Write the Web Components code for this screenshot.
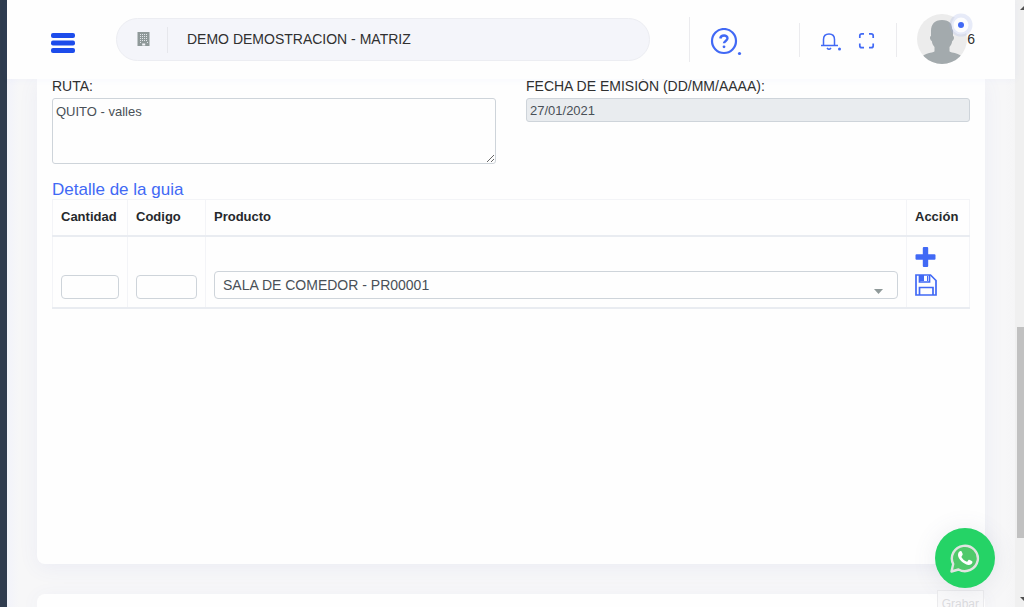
<!DOCTYPE html>
<html lang="es">
<head>
<meta charset="utf-8">
<meta name="viewport" content="width=device-width, initial-scale=1">
<title>Guia de remision</title>
<style>
    body {
        margin: 0;
        font-family: "Liberation Sans", Arial, sans-serif;
        font-size: 14px;
        color: #303030;
        background: #f7f7f8;
        --primary: #4169f5;
        --border: #ced4da;
        --line: #e9ecf1;
    }
</style>
</head>
<body>
<app-shell>
    <top-bar slot="header" company="DEMO DEMOSTRACION - MATRIZ" count="6"></top-bar>
    <panel-card class="detail">
        <div style="display: grid; grid-template-columns: 1fr 1fr; gap: 30px; align-items: start;">
            <form-field label="RUTA:" value="QUITO - valles" type="textarea"></form-field>
            <form-field label="FECHA DE EMISIÓN (DD/MM/AAAA):" value="27/01/2021" type="readonly"></form-field>
        </div>
        <guide-table heading="Detalle de la guia"></guide-table>
    </panel-card>
    <panel-card class="next">
        <save-button>Grabar</save-button>
    </panel-card>
    <whatsapp-link slot="float"></whatsapp-link>
</app-shell>

<script>
class AppShell extends HTMLElement {
    constructor() {
        super();
        this.attachShadow({ mode: 'open' }).innerHTML = `
            <style>
                :host {
                    display: grid;
                    grid-template-columns: 7px 1fr 9px;
                    height: 100vh;
                    overflow: hidden;
                }
                .side { background: #2f3c4e; }
                .page { display: flex; flex-direction: column; min-width: 0; }
                main {
                    flex: 1;
                    display: flex;
                    flex-direction: column;
                    gap: 30px;
                    padding: 0 30px;
                    min-height: 0;
                    background: linear-gradient(90deg, #f2f3fa, #f7f7f8 12px, #f7f7f8 calc(100% - 10px), #f5f5f6);
                }
                /* the last card runs on below the fold */
                ::slotted(.detail) { flex: 1; border-radius: 0 0 8px 8px; }
                ::slotted(.next) { flex: 0 0 13px; border-radius: 8px 8px 0 0; }
                .bar {
                    display: flex;
                    flex-direction: column;
                    justify-content: space-between;
                    background: #f0f0f0;
                }
                .bar svg { width: 9px; height: 14px; }
                .track { flex: 1; display: flex; flex-direction: column; padding-left: 2px; }
                .before { flex: 313; }
                .thumb { flex: 211; background: #c1c1c1; }
                .after { flex: 55; }
            </style>
            <div class="side"></div>
            <div class="page">
                <slot name="header"></slot>
                <main><slot></slot></main>
            </div>
            <div class="bar" aria-hidden="true">
                <svg viewBox="0 0 9 14"><path d="M5 10l4-4v4z" fill="#505050"/></svg>
                <div class="track"><div class="before"></div><div class="thumb"></div><div class="after"></div></div>
                <svg viewBox="0 0 9 14"><path d="M5 4l4 4V4z" fill="#505050"/></svg>
            </div>
            <slot name="float"></slot>
        `;
    }
}

class TopBar extends HTMLElement {
    constructor() {
        super();
        this.attachShadow({ mode: 'open' }).innerHTML = `
            <style>
                :host {
                    display: flex;
                    align-items: center;
                    height: 79px;
                    padding: 0 40px 0 43px;
                    box-sizing: border-box;
                    background: #fefefe;
                    box-shadow: 0 0 8px rgba(65, 105, 245, 0.05);
                    z-index: 2;
                }
                button {
                    border: 0;
                    padding: 0;
                    background: none;
                    color: var(--primary);
                    display: block;
                    cursor: pointer;
                }
                svg { display: block; }
                .menu { margin: 7px 40px 0 0; }
                .company {
                    flex: 0 1 534px;
                    height: 43px;
                    box-sizing: border-box;
                    display: flex;
                    align-items: center;
                    border: 1px solid #ecedf2;
                    border-radius: 22px;
                    background: #f4f5fa;
                    padding-left: 20px;
                }
                .company span {
                    border-left: 1px solid #e6e7ec;
                    line-height: 24px;
                    padding-bottom: 2px;
                    margin-left: 17px;
                    padding-left: 19px;
                }
                .tools { flex: 1; display: flex; align-items: center; justify-content: flex-end; }
                .tools > i { width: 1px; height: 34px; background: #ebebee; }
                .tools > i.tall { height: 45px; }
                .help { margin: 4px 57px 0 20px; }
                .bell { margin: 3px 16px 0 20px; }
                .full { margin: 3px 20px 0 0; }
                .user { display: flex; align-items: center; margin: 0 0 2px 20px; color: #303030; font: inherit; }
            </style>
            <button class="menu" aria-label="Menu">
                <svg width="26" height="20" viewBox="0 0 26 20" fill="#1d4ceb"><rect x="1" width="24" height="5" rx="2"/><rect x="1" y="7.5" width="24" height="5" rx="2"/><rect x="1" y="15" width="24" height="5" rx="2"/></svg>
            </button>
            <div class="company">
                <svg width="13" height="16" viewBox="0 0 13 16"><path d="M.5 0h12v14h-12z" fill="#8f9999"/><path d="M3 2.500h8M3 4.500h8M3 6.500h8M3 8.500h8M3 10.500h1M10 10.500h1" stroke="#e2e5ea" stroke-dasharray="1 1"/><path d="M5.200 11.500h3V13.500h-3z" fill="#f4f5fa"/></svg>
                <span></span>
            </div>
            <div class="tools">
                <i class="tall"></i>
                <button class="help" aria-label="Ayuda">
                    <svg width="32" height="28" viewBox="0 0 32 28" fill="none" stroke="currentColor" stroke-width="2.200"><circle cx="14" cy="13" r="12"/><path d="M10.300 10.500C10.800 6.500 17.500 6.500 17.500 10.300c0 2.500-3.500 2.700-3.500 5" stroke-width="2.400"/><circle cx="14" cy="18.800" r="1.400" fill="currentColor" stroke="none"/><circle cx="29.500" cy="25.500" r="1.600" fill="currentColor" stroke="none"/></svg>
                </button>
                <i></i>
                <button class="bell" aria-label="Notificaciones">
                    <svg width="22" height="20" viewBox="0 0 22 20" fill="none" stroke="currentColor" stroke-width="1.500"><path d="M1 14.500h17M3.500 14.500V8.500C3.500 5 5.800 3 9 3s5.500 2 5.500 5.500v6"/><path d="M7 17q2 2.500 4 0"/><circle cx="19.500" cy="18" r="1.500" fill="currentColor" stroke="none"/></svg>
                </button>
                <button class="full" aria-label="Pantalla completa">
                    <svg width="18" height="18" viewBox="0 0 18 18" fill="none" stroke="currentColor" stroke-width="1.700"><path d="M1.800 6V3.800q0-2 2-2H6M11 1.800h2.200q2 0 2 2V6M15.200 11.500v2.200q0 2-2 2H11M6 15.700H3.800q-2 0-2-2v-2.200"/></svg>
                </button>
                <i></i>
                <button class="user" aria-label="Usuario">
                    <svg width="50" height="50" viewBox="0 0 50 50" overflow="visible"><defs><clipPath id="c"><circle cx="25" cy="25" r="25"/></clipPath></defs><circle cx="25" cy="25" r="25" fill="#ececec"/><path clip-path="url(#c)" fill="#a3aaad" d="M25 6c7.500 0 11 4.500 11 11v5c1.500.3 1.300 4-.8 5-.4 3-1.300 4.500-2.700 6v4c0 2 7 1 12.500 5.500V51H5v-8.500c5.500-4.500 12.500-3.500 12.500-5.500v-4c-1.400-1.500-2.300-3-2.700-6-2.100-1-2.300-4.700-.8-5v-5c0-6.500 3.500-11 11-11z"/><circle cx="44" cy="11" r="9.500" fill="#fdfdfe" stroke="#a3b2e8" stroke-opacity=".25" stroke-width="4"/><circle cx="44" cy="11" r="3" fill="#4169f5"/></svg>
                    <span class="count"></span>
                </button>
            </div>
        `;
    }

    connectedCallback() {
        this.shadowRoot.querySelector('.company span').textContent = this.getAttribute('company');
        this.shadowRoot.querySelector('.count').textContent = this.getAttribute('count');
    }
}

class PanelCard extends HTMLElement {
    constructor() {
        super();
        this.attachShadow({ mode: 'open' }).innerHTML = `
            <style>
                :host {
                    display: block;
                    position: relative;
                    box-sizing: border-box;
                    min-height: 0;
                    padding: 0 15px;
                    background: #fefefe;
                    box-shadow: 0 4px 20px rgba(80, 100, 200, 0.07);
                }
            </style>
            <slot></slot>
        `;
    }
}

class FormField extends HTMLElement {
    constructor() {
        super();
        this.attachShadow({ mode: 'open' });
    }

    connectedCallback() {
        const control = this.getAttribute('type') === 'textarea'
            ? '<textarea id="control"></textarea>'
            : '<input id="control" type="text" readonly>';

        this.shadowRoot.innerHTML = `
            <style>
                :host { display: block; }
                label { display: block; line-height: 14px; padding-bottom: 5px; }
                input, textarea {
                    display: block;
                    width: 100%;
                    height: 24px;
                    box-sizing: border-box;
                    margin: 0;
                    padding: 0 3px;
                    border: 1px solid var(--border);
                    border-radius: 3px;
                    background: #fefefe;
                    color: #495057;
                    font: 13px "Liberation Sans", Arial, sans-serif;
                }
                textarea { height: 66px; padding: 5px 3px; }
                input[readonly] { background: #e9ecef; }
            </style>
            <label for="control">${this.getAttribute('label')}</label>
            ${control}
        `;
        this.shadowRoot.querySelector('#control').value = this.getAttribute('value');
    }
}

class GuideTable extends HTMLElement {
    constructor() {
        super();
        this.attachShadow({ mode: 'open' }).innerHTML = `
            <style>
                :host { display: block; margin-top: 16px; }
                h2 {
                    margin: 0;
                    font-size: 17px;
                    font-weight: normal;
                    line-height: 19px;
                    color: var(--primary);
                }
                table { width: 100%; border-collapse: collapse; table-layout: fixed; }
                th, td { border: 1px solid #f3f4f7; padding: 8px; }
                th {
                    height: 19px;
                    border-bottom: 2px solid var(--line);
                    text-align: left;
                    vertical-align: top;
                    font-size: 13px;
                    line-height: 18px;
                    color: #26292c;
                }
                td { height: 54px; border-bottom: 2px solid var(--line); vertical-align: bottom; }
                td.action { vertical-align: middle; }
                input, select {
                    display: block;
                    width: 100%;
                    box-sizing: border-box;
                    margin: 0;
                    border: 1px solid var(--border);
                    border-radius: 4px;
                    background: #fefefe;
                    color: #495057;
                    font: 14px "Liberation Sans", Arial, sans-serif;
                }
                input { height: 24px; }
                .pick { position: relative; }
                select { appearance: none; height: 28px; padding: 0 24px 0 8px; }
                .pick svg { position: absolute; right: 15px; bottom: 5px; }
                .actions { display: flex; flex-direction: column; gap: 6px; }
                button { border: 0; padding: 0; background: none; color: var(--primary); align-self: flex-start; }
                svg { display: block; }
            </style>
            <h2></h2>
            <table>
                <colgroup>
                    <col style="width: 75px"><col style="width: 78px"><col><col style="width: 63px">
                </colgroup>
                <thead>
                    <tr><th>Cantidad</th><th>Codigo</th><th>Producto</th><th>Acción</th></tr>
                </thead>
                <tbody>
                    <tr>
                        <td><input type="text" aria-label="Cantidad"></td>
                        <td><input type="text" aria-label="Codigo"></td>
                        <td>
                            <div class="pick">
                                <select aria-label="Producto"><option>SALA DE COMEDOR - PR00001</option></select>
                                <svg width="9" height="5" viewBox="0 0 9 5"><path d="M0 0h9L4.500 5z" fill="#8f9999"/></svg>
                            </div>
                        </td>
                        <td class="action">
                            <div class="actions">
                                <button aria-label="Agregar"><svg width="22" height="20" viewBox="0 0 22 20"><path d="M8.800 0h3.400q1 0 1 1v6.200h6.300q1 0 1 1v3.600q0 1-1 1h-6.300V19q0 1-1 1H8.800q-1 0-1-1v-6.200H1.500q-1 0-1-1V8.200q0-1 1-1h6.300V1q0-1 1-1z" fill="currentColor"/></svg></button>
                                <button aria-label="Guardar"><svg width="22" height="24" viewBox="0 0 22 24" fill="none" stroke="currentColor" stroke-width="1.700"><path d="M1 2h14.500L21 7.500V22H1z"/><path d="M4.500 2v7h10V2M4.500 22v-7.500h13.500V22"/><path d="M5 2h4v6H5zM12 3h1v5h-1z" fill="currentColor" stroke="none"/></svg></button>
                            </div>
                        </td>
                    </tr>
                </tbody>
            </table>
        `;
    }

    connectedCallback() {
        this.shadowRoot.querySelector('h2').textContent = this.getAttribute('heading');
    }
}

class SaveButton extends HTMLElement {
    constructor() {
        super();
        this.attachShadow({ mode: 'open' }).innerHTML = `
            <style>
                :host { position: absolute; right: 1px; top: -4px; }
                button {
                    display: block;
                    padding: 4px;
                    border: 1px solid #ebebed;
                    background: #f9f9fa;
                    color: #dcdcdf;
                    font: 12px/18px "Liberation Sans", Arial, sans-serif;
                }
            </style>
            <button><slot></slot></button>
        `;
    }
}

class WhatsappLink extends HTMLElement {
    constructor() {
        super();
        this.attachShadow({ mode: 'open' }).innerHTML = `
            <style>
                :host { position: fixed; right: 29px; bottom: 19px; z-index: 3; }
                a {
                    display: flex;
                    align-items: center;
                    justify-content: center;
                    width: 60px;
                    height: 60px;
                    border-radius: 50%;
                    background: #25d366;
                    box-shadow: 0 2px 24px rgba(90, 100, 130, 0.12);
                }
            </style>
            <a href="#whatsapp" aria-label="WhatsApp">
                <svg width="30" height="30" viewBox="0 0 30 30"><path d="M1.500 28.500l1.700-7.500A13 12.700 0 1 1 8.500 26.500z" fill="#50c96b" stroke="#e0e4e1" stroke-width="2.400" stroke-linejoin="round"/><path d="M10 8.200c1.200-.4 1.700.2 2.200 1.600.7 1.800.8 2-.6 3.600-.3.400-.2.700.1 1.200 1.200 1.900 2.700 3.200 4.700 4 .5.200.8.100 1.200-.4 1.200-1.500 1.300-1.700 3.200-.8 1.700.8 1.800 1 1.600 2.200-.4 1.700-2.300 2.500-4.100 2.300-5-.7-10-5.600-10.300-9.600-.1-1.900.7-3.600 2-4.100z" fill="#fff"/></svg>
            </a>
        `;
    }
}

customElements.define('app-shell', AppShell);
customElements.define('top-bar', TopBar);
customElements.define('panel-card', PanelCard);
customElements.define('form-field', FormField);
customElements.define('guide-table', GuideTable);
customElements.define('save-button', SaveButton);
customElements.define('whatsapp-link', WhatsappLink);
</script>
</body>
</html>
